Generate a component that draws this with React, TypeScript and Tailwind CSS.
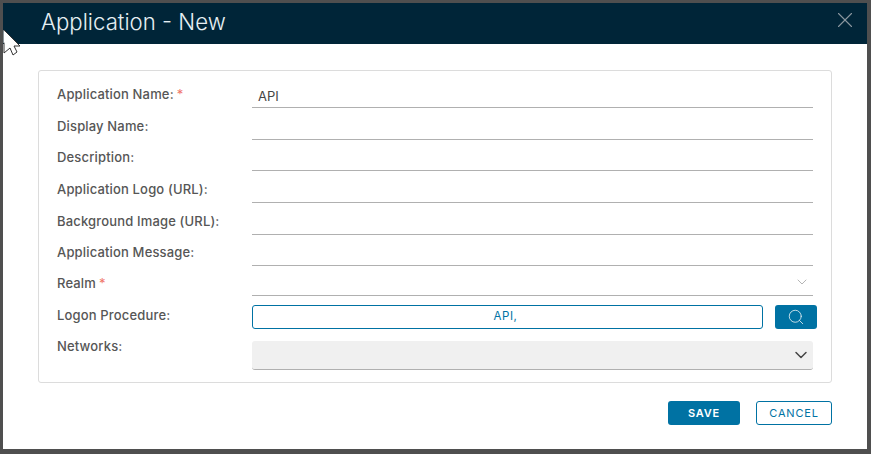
import {ChevronDown, Search, X} from 'lucide-react';

const fields = [
    {label: 'Application Name:', required: true, value: 'API'},
    {label: 'Display Name:'},
    {label: 'Description:'},
    {label: 'Application Logo (URL):'},
    {label: 'Background Image (URL):'},
    {label: 'Application Message:'},
];

const Label = ({text, required}: {text: string; required?: boolean}) => (
    <div className="w-[195px] shrink-0 text-[13px] leading-[16px] font-medium tracking-[0.16px] text-[#565656]">
        {text}
        {required && <span className="ml-[3px] font-normal text-[#f0766a]">*</span>}
    </div>
);

export default function App() {
    return (
        <div className="relative h-[454px] w-[871px] overflow-hidden bg-[#4f4f4f] pt-[3px] pl-[3px] font-['Inter',sans-serif]">
            <div className="flex h-[446px] w-[864px] flex-col bg-white">
                <div className="flex h-[41px] items-center justify-between bg-[#002538] pr-[9px] pl-[38px]">
                    <span className="mb-[4px] text-[22.2px] leading-[28px] font-light text-[#e6eff3]">Application - New</span>
                    <X size={26} strokeWidth={1} className="mb-[7px] text-[#8b979f]" />
                </div>

                <div className="mx-[35px] mt-[26px] h-[313px] rounded-[3px] border border-[#dcdcdc] px-[18px] pt-[8.3px]">
                    {fields.map(field => (
                        <div key={field.label} className="flex h-[31.6px]">
                            <div className="pt-[7px]">
                                <Label text={field.label} required={field.required} />
                            </div>
                            <div className="flex h-[29px] w-[561px] items-center border-b border-[#b0b0b0] pt-[6px] pl-[6px] text-[13px] text-[#454545]">
                                {field.value}
                            </div>
                        </div>
                    ))}

                    <div className="flex h-[30px]">
                        <div className="pt-[6px]">
                            <Label text="Realm" required />
                        </div>
                        <div className="flex h-[27px] w-[561px] items-center justify-end border-b border-[#b0b0b0] pr-[3px]">
                            <ChevronDown size={16} strokeWidth={1.5} className="text-[#b5b5b5]" />
                        </div>
                    </div>

                    <div className="mt-[6px] flex h-[24px]">
                        <div className="pt-[2px]">
                            <Label text="Logon Procedure:" />
                        </div>
                        <div className="flex h-[24px] w-[511px] shrink-0 items-center justify-center rounded-[3px] border border-[#0072a3] pr-[4px] text-[11.5px] tracking-[0.6px] text-[#0072a3]">
                            API,
                        </div>
                        <button className="ml-[12px] flex h-[24px] w-[42px] shrink-0 items-center justify-center rounded-[3px] bg-[#0072a3]">
                            <Search size={18} strokeWidth={1.1} className="text-[#e6eff3]" />
                        </button>
                    </div>

                    <div className="mt-[12px] flex">
                        <div className="-mt-[3px]">
                            <Label text="Networks:" />
                        </div>
                        <div className="flex h-[29px] w-[561px] items-center justify-end rounded-[3px] border-b border-[#b0b0b0] bg-[#f0f0f0] pr-[2px]">
                            <ChevronDown size={20} strokeWidth={1.8} className="text-[#454545]" />
                        </div>
                    </div>
                </div>

                <div className="mt-[18px] flex justify-end gap-[16px] pr-[35px]">
                    <button className="h-[24px] w-[72px] rounded-[3px] bg-[#0072a3] text-[11px] font-semibold tracking-[0.8px] text-white">
                        SAVE
                    </button>
                    <button className="h-[24px] w-[76px] rounded-[3px] border border-[#0072a3] text-[11px] tracking-[0.8px] text-[#0072a3]">
                        CANCEL
                    </button>
                </div>
            </div>

            <svg className="absolute top-[29px] left-[3px]" width="19" height="28" viewBox="0 0 19 28">
                <path d="M1 1 L17 17 L11 17 L14 23 L10 26 L7 19 L1 24 Z" fill="#fff" stroke="#333" strokeWidth="1" />
                <path d="M0.5 1 L0.5 14 L9 11 Z" fill="#fff" />
            </svg>
        </div>
    );
}
